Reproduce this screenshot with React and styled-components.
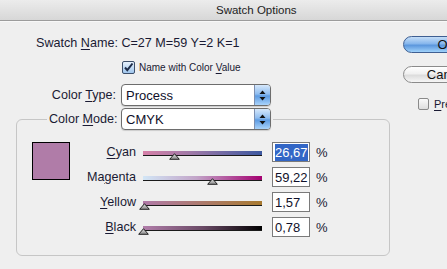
import React from "react";
import styled, { createGlobalStyle } from "styled-components";

const Global = createGlobalStyle`
  html, body { margin: 0; padding: 0; background: #efefef; overflow: hidden; }
  body { font-family: "Liberation Sans", Arial, sans-serif; color: #1a1a33; }
  u { text-decoration: underline; text-underline-offset: 2px; }
`;

const Window = styled.div`
  width: 447px;
  height: 269px;
  background: #efefef;
`;

const TitleBar = styled.div`
  height: 20px;
  background: linear-gradient(#ececec, #d7d7d7);
  border-bottom: 1px solid #9c9c9c;
  box-shadow: 0 1px 0 #f8f8f8;
  display: flex;
  align-items: center;
`;

const Title = styled.div`
  margin-left: 216px;
  font-size: 11.5px;
  color: #222;
`;

const Body = styled.div`
  display: flex;
`;

const Main = styled.div`
  width: 374px;
  padding-left: 16px;
  display: flex;
  flex-direction: column;
`;

const NameLine = styled.div`
  margin: 14px 0 0 20px;
  font-size: 12.6px;
  line-height: 16px;
`;

const CheckRow = styled.div`
  display: flex;
  align-items: center;
  margin: 10px 0 0 106px;
  height: 13px;
  gap: 4px;
`;

const SmallText = styled.span`
  font-size: 10px;
`;

const FieldRow = styled.div`
  display: flex;
  align-items: center;
  margin-top: ${(p) => p.$mt || 0}px;
`;

const Label = styled.div`
  width: ${(p) => p.$w}px;
  text-align: right;
  font-size: 12.6px;
  margin-right: 5px;
  white-space: nowrap;
`;

const SelectBox = styled.div`
  width: 150px;
  height: 22px;
  box-sizing: border-box;
  border: 1px solid #6d6d6d;
  border-radius: 4px;
  background: #fff;
  display: flex;
  align-items: stretch;
  overflow: hidden;
  box-shadow: 0 1px 1px rgba(0,0,0,0.15);
`;

const SelectText = styled.div`
  flex: 1;
  font-size: 13px;
  padding-left: 4px;
  display: flex;
  align-items: center;
  color: #10102a;
`;

const Stepper = styled.div`
  width: 15px;
  border-left: 1px solid #7d8fb0;
  background: linear-gradient(#d6e8fb, #8fbdf0 45%, #5d9be2 55%, #a9d3fb);
  display: flex;
  align-items: center;
  justify-content: center;
`;

const Group = styled.fieldset`
  margin: 2px 0 0 0;
  padding: 0 0 18px 0;
  width: 374px;
  box-sizing: border-box;
  border: 1px solid #c6c6c6;
  border-radius: 6px;
  min-width: 0;
`;

const Legend = styled.legend`
  margin-left: 30px;
  padding: 0 2px;
`;

const GroupContent = styled.div`
  display: flex;
  align-items: flex-start;
  padding: 12px 0 0 15px;
`;

const Swatch = styled.div`
  width: 38px;
  height: 38px;
  box-sizing: border-box;
  border: 1px solid #000;
  background: #b07ca8;
`;

const Rows = styled.div`
  display: flex;
  flex-direction: column;
  gap: 5px;
`;

const Row = styled.div`
  display: flex;
  align-items: center;
  height: 20px;
`;

const RowLabel = styled.div`
  width: 66px;
  text-align: right;
  font-size: 12.6px;
  margin-right: 7px;
`;

const SliderArea = styled.div`
  position: relative;
  width: 119px;
  height: 20px;
  margin-right: 10px;
  display: flex;
  align-items: center;
`;

const Track = styled.div`
  width: 100%;
  height: 4px;
  margin-top: 2px;
  background: ${(p) => p.$grad};
  border-bottom: 1px solid #1a1a1a;
`;

const Thumb = styled.svg`
  position: absolute;
  top: 11px;
`;

const ValueBox = styled.div`
  width: 38px;
  height: 20px;
  box-sizing: border-box;
  border: 1px solid #7a7a7a;
  background: #fff;
  font-size: 13px;
  padding-left: 2px;
  display: flex;
  align-items: center;
  color: #10102a;
`;

const Highlight = styled.span`
  background: #3266c6;
  color: #fff;
  padding: 1px 0;
`;

const Percent = styled.span`
  margin-left: 6px;
  font-size: 13px;
`;

const Side = styled.div`
  margin-left: 13px;
  display: flex;
  flex-direction: column;
  padding-top: 15px;
`;

const Pill = styled.div`
  width: 88px;
  height: 17px;
  box-sizing: border-box;
  border-radius: 9px;
  border: 1px solid ${(p) => (p.$primary ? "#3f5f92" : "#8b8b8b")};
  background: ${(p) =>
    p.$primary
      ? "linear-gradient(#c5def8, #86b6ec 45%, #5b97dd 55%, #9fd1fa)"
      : "linear-gradient(#ffffff, #f0f0f0 45%, #dcdcdc 55%, #f6f6f6)"};
  font-size: 13px;
  display: flex;
  align-items: center;
  justify-content: center;
  color: #111;
  margin-bottom: ${(p) => p.$mb || 0}px;
`;

const PreviewRow = styled.div`
  display: flex;
  align-items: center;
  gap: 5px;
  margin: 15px 0 0 15px;
  font-size: 11px;
`;

const EmptyBox = styled.div`
  width: 11px;
  height: 12px;
  box-sizing: border-box;
  border: 1px solid #8a8a8a;
  border-radius: 2px;
  background: linear-gradient(#fafafa, #dedede);
`;

function Checked() {
  return (
    <svg width="13" height="13" viewBox="0 0 13 13">
      <defs>
        <linearGradient id="cb" x1="0" y1="0" x2="0" y2="1">
          <stop offset="0" stopColor="#eaf3fd" />
          <stop offset="1" stopColor="#9cc4ec" />
        </linearGradient>
      </defs>
      <rect x="0.5" y="0.5" width="12" height="12" rx="1.5" fill="url(#cb)" stroke="#3d4f6a" />
      <path d="M3 6.5 L5.3 9.2 L10.5 2.5" fill="none" stroke="#1f2d4a" strokeWidth="2" />
    </svg>
  );
}

function Arrows() {
  return (
    <svg width="7" height="11" viewBox="0 0 7 11">
      <path d="M3.5 0.5 L6.5 4 L0.5 4 Z" fill="#111" />
      <path d="M3.5 10.5 L6.5 7 L0.5 7 Z" fill="#111" />
    </svg>
  );
}

function Select({ value }) {
  return (
    <SelectBox>
      <SelectText>{value}</SelectText>
      <Stepper>
        <Arrows />
      </Stepper>
    </SelectBox>
  );
}

function ThumbIcon({ pct }) {
  return (
    <Thumb width="11" height="7" viewBox="0 0 11 7" style={{ left: `${pct * 1.18 - 5.5}px` }}>
      <defs>
        <linearGradient id="th" x1="0" y1="0" x2="0" y2="1">
          <stop offset="0" stopColor="#e4e4e4" />
          <stop offset="1" stopColor="#8a8a8a" />
        </linearGradient>
      </defs>
      <path d="M5.5 0.7 L10.3 6.3 L0.7 6.3 Z" fill="url(#th)" stroke="#222" strokeWidth="1" strokeLinejoin="round" />
    </Thumb>
  );
}

const channels = [
  { label: <><u>C</u>yan</>, value: "26,67", pct: 26.67, grad: "linear-gradient(90deg, #d680a8, #a07aa8 40%, #3c58a0)", selected: true },
  { label: <>Ma<u>g</u>enta</>, value: "59,22", pct: 59.22, grad: "linear-gradient(90deg, #d2e6f6, #c2a4c8 45%, #a40070)" },
  { label: <><u>Y</u>ellow</>, value: "1,57", pct: 1.57, grad: "linear-gradient(90deg, #b07aa8, #a87a30)" },
  { label: <><u>B</u>lack</>, value: "0,78", pct: 0.78, grad: "linear-gradient(90deg, #b27eaa, #6a4a66 50%, #000)" },
];

export default function App() {
  return (
    <>
      <Global />
      <Window>
        <TitleBar>
          <Title>Swatch Options</Title>
        </TitleBar>
        <Body>
          <Main>
            <NameLine>
              Swatch <u>N</u>ame: C=27 M=59 Y=2 K=1
            </NameLine>
            <CheckRow>
              <Checked />
              <SmallText>
                Name with Color <u>V</u>alue
              </SmallText>
            </CheckRow>
            <FieldRow $mt={10}>
              <Label $w={100}>
                Color <u>T</u>ype:
              </Label>
              <Select value="Process" />
            </FieldRow>
            <Group>
              <Legend>
                <FieldRow>
                  <Label $w={67}>
                    Color <u>M</u>ode:
                  </Label>
                  <Select value="CMYK" />
                </FieldRow>
              </Legend>
              <GroupContent>
                <Swatch />
                <Rows>
                  {channels.map((c, i) => (
                    <Row key={i}>
                      <RowLabel>{c.label}</RowLabel>
                      <SliderArea>
                        <Track $grad={c.grad} />
                        <ThumbIcon pct={c.pct} />
                      </SliderArea>
                      <ValueBox>{c.selected ? <Highlight>{c.value}</Highlight> : c.value}</ValueBox>
                      <Percent>%</Percent>
                    </Row>
                  ))}
                </Rows>
              </GroupContent>
            </Group>
          </Main>
          <Side>
            <Pill $primary $mb={13}>OK</Pill>
            <Pill>Cancel</Pill>
            <PreviewRow>
              <EmptyBox />
              <span>
                <u>P</u>review
              </span>
            </PreviewRow>
          </Side>
        </Body>
      </Window>
    </>
  );
}
